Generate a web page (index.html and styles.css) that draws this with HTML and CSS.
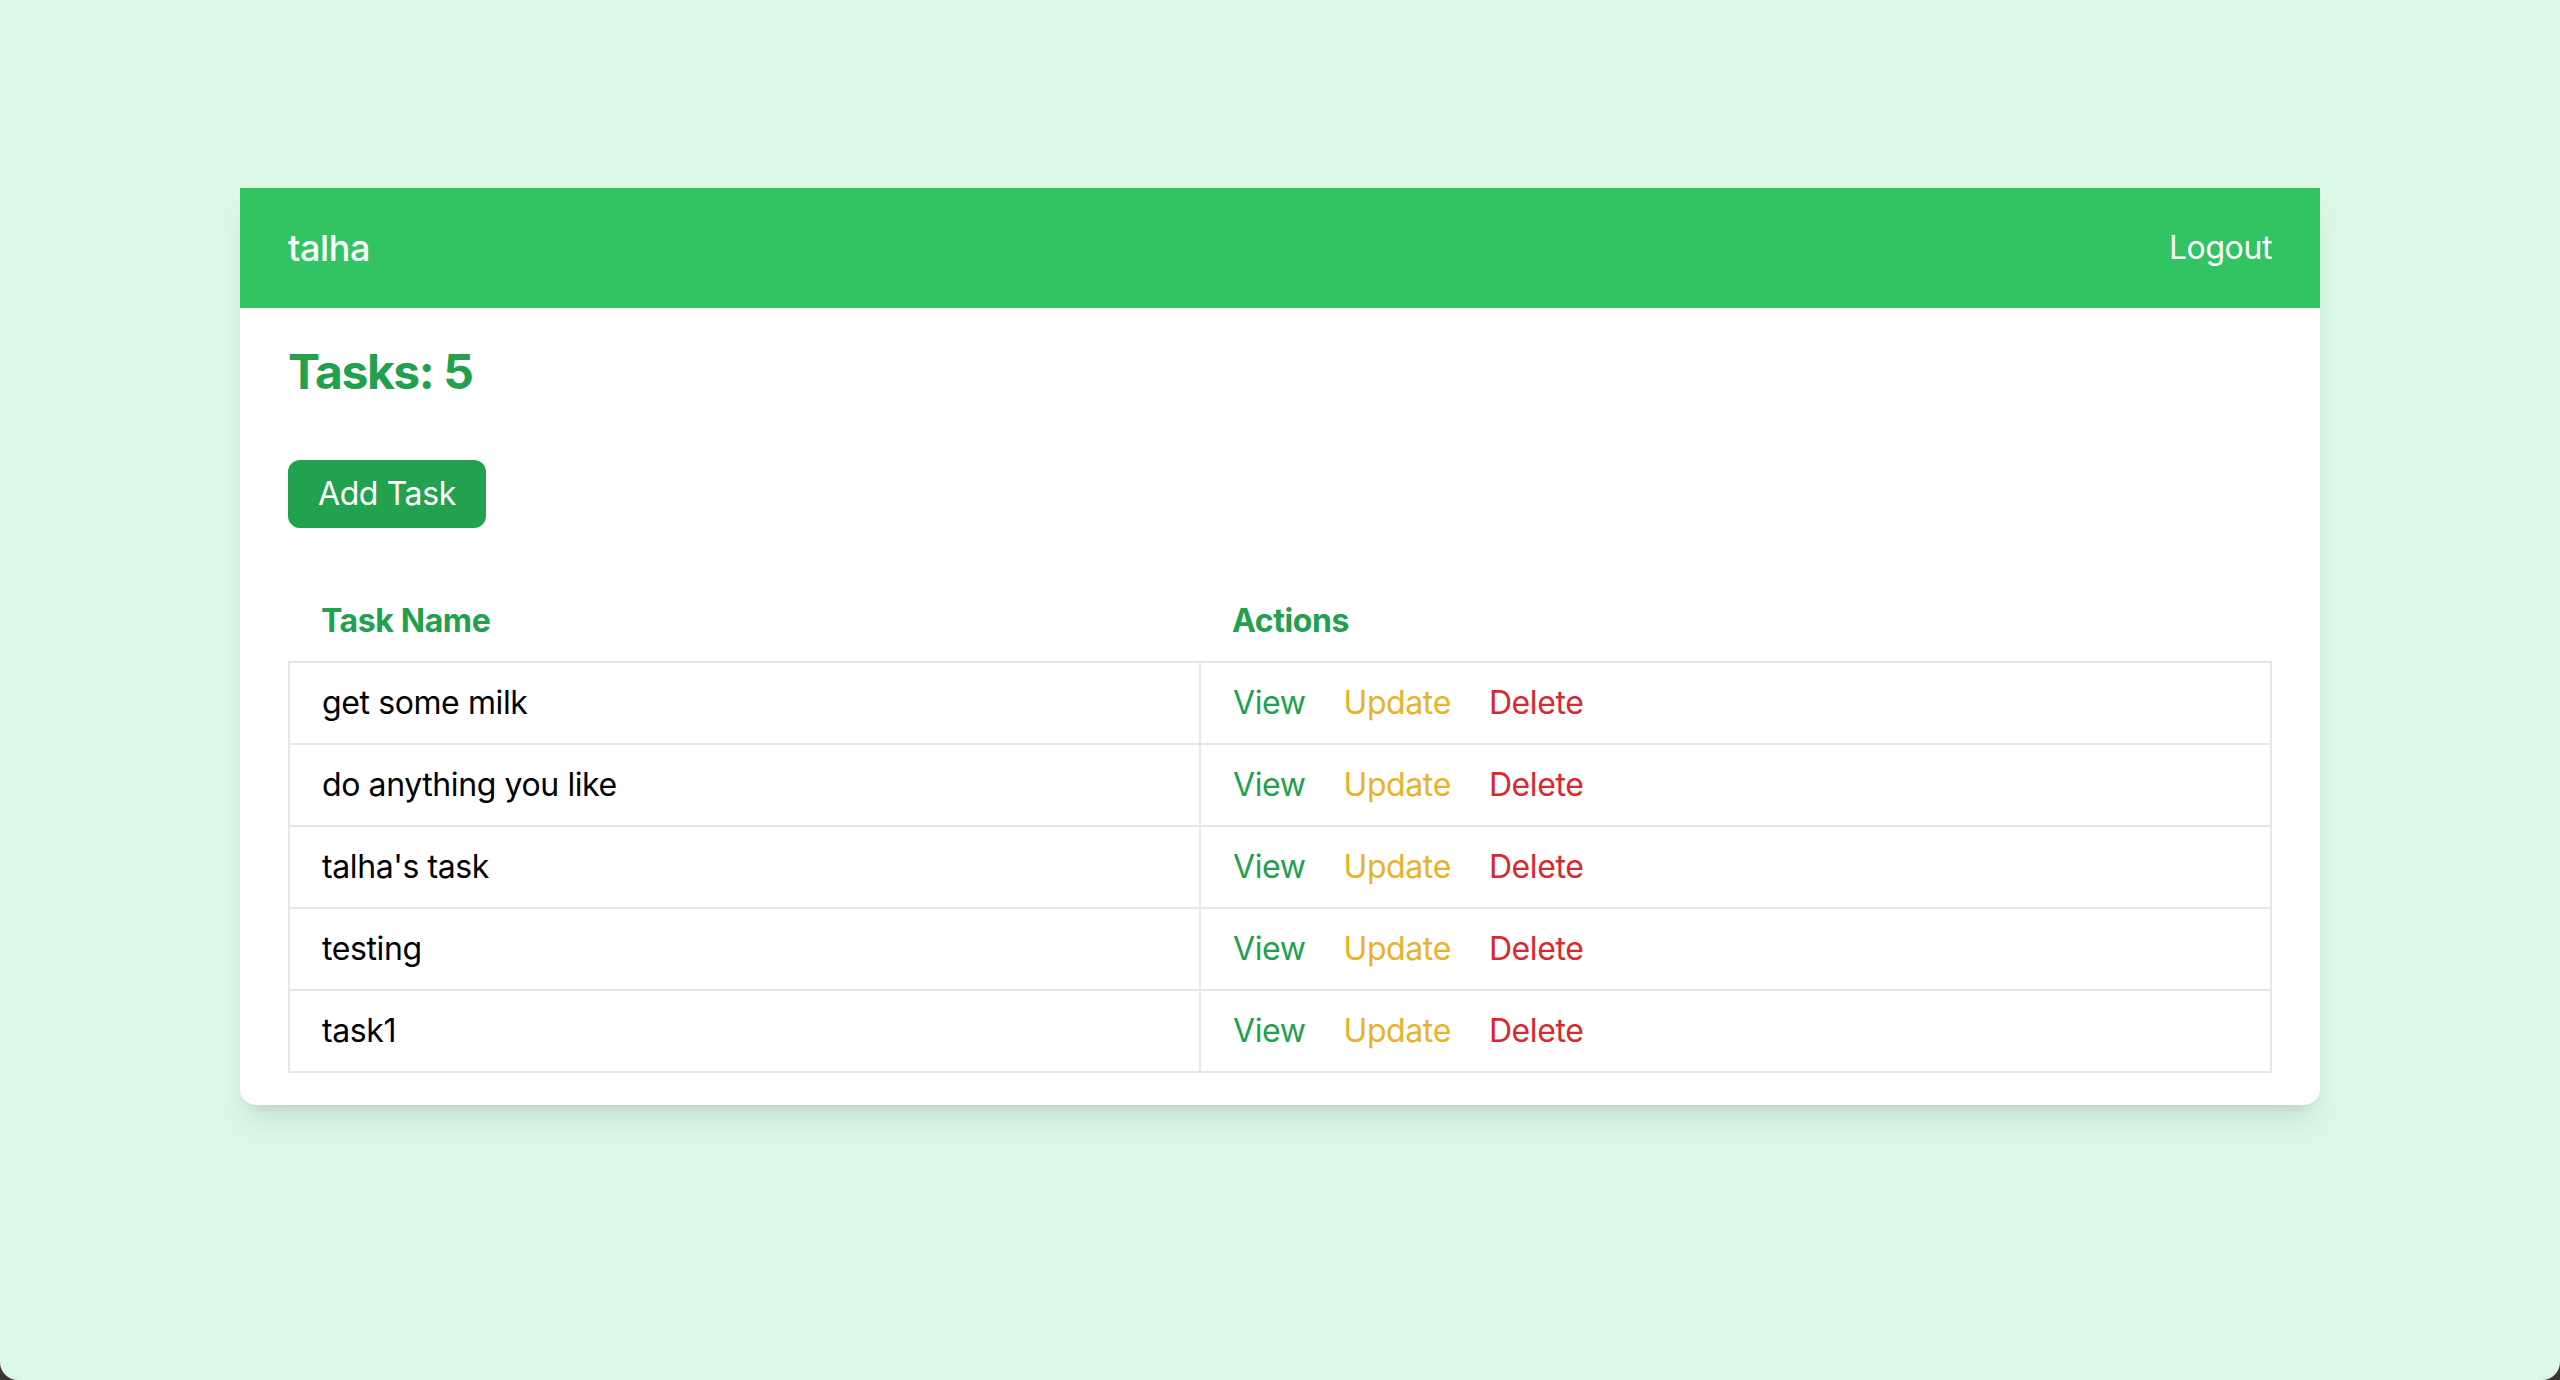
FILE: index.html
```html
<!DOCTYPE html>
<html lang="en">
<head>
<meta charset="utf-8">
<title>Tasks</title>
<link rel="stylesheet" href="styles.css">
</head>
<body>
<div class="page">
  <div class="card">
    <header class="topbar">
      <span class="user">talha</span>
      <a class="logout" href="#">Logout</a>
    </header>
    <main class="content">
      <h1 class="count">Tasks: 5</h1>
      <button class="add-btn" type="button">Add Task</button>
      <table class="tasks">
        <colgroup>
          <col class="col-name">
          <col class="col-actions">
        </colgroup>
        <thead>
          <tr><th>Task Name</th><th>Actions</th></tr>
        </thead>
        <tbody>
          <tr><td>get some milk</td><td><div class="actions"><a class="view" href="#">View</a><a class="update" href="#">Update</a><a class="delete" href="#">Delete</a></div></td></tr>
          <tr><td>do anything you like</td><td><div class="actions"><a class="view" href="#">View</a><a class="update" href="#">Update</a><a class="delete" href="#">Delete</a></div></td></tr>
          <tr><td>talha's task</td><td><div class="actions"><a class="view" href="#">View</a><a class="update" href="#">Update</a><a class="delete" href="#">Delete</a></div></td></tr>
          <tr><td>testing</td><td><div class="actions"><a class="view" href="#">View</a><a class="update" href="#">Update</a><a class="delete" href="#">Delete</a></div></td></tr>
          <tr><td>task1</td><td><div class="actions"><a class="view" href="#">View</a><a class="update" href="#">Update</a><a class="delete" href="#">Delete</a></div></td></tr>
        </tbody>
      </table>
    </main>
  </div>
</div>
</body>
</html>
```
FILE: styles.css
```css
html {
  background: #3a3636;
}
body {
  margin: 0;
  font-family: Inter, "Noto Sans", "Liberation Sans", sans-serif;
  letter-spacing: -0.025em;
  color: #000;
}
.page {
  min-height: 1380px;
  box-sizing: border-box;
  background: #dcf9e8;
  padding-top: 188px;
  border-bottom-left-radius: 18px;
  border-bottom-right-radius: 18px;
}
.card {
  width: 2080px;
  margin: 0 auto;
  background: #fff;
  border-radius: 16px;
  box-shadow: 0 20px 30px -6px rgba(0, 0, 0, 0.1), 0 8px 12px -8px rgba(0, 0, 0, 0.1);
}
.topbar {
  display: flex;
  justify-content: space-between;
  align-items: center;
  background: #32c463;
  color: #fff;
  padding: 32px 48px;
  line-height: 56px;
}
.user {
  font-size: 36px;
  font-weight: 500;
}
.logout {
  font-size: 32px;
  color: #fff;
  text-decoration: none;
}
.content {
  padding: 32px 48px;
}
.count {
  margin: 0;
  font-size: 48px;
  line-height: 64px;
  font-weight: 700;
  letter-spacing: -0.03em;
  color: #22a04e;
}
.add-btn {
  display: block;
  margin-top: 56px;
  border: 0;
  border-radius: 12px;
  background: #22a14f;
  color: #fff;
  font-family: inherit;
  letter-spacing: inherit;
  font-size: 32px;
  line-height: 40px;
  padding: 14px 30px;
}
.tasks {
  width: 100%;
  margin-top: 53px;
  border-collapse: collapse;
  table-layout: fixed;
  font-size: 32px;
  line-height: 48px;
}
.col-name {
  width: 911px;
}
.tasks th {
  text-align: left;
  font-weight: 700;
  color: #22a04e;
  padding: 16px 32px;
}
.tasks td {
  border: 2px solid #e5e5ea;
  padding: 16px 32px;
}
.actions {
  display: flex;
  gap: 38px;
}
.actions a {
  text-decoration: none;
}
.view { color: #22a04e; }
.update { color: #e8b22b; }
.delete { color: #d9282f; }
```
